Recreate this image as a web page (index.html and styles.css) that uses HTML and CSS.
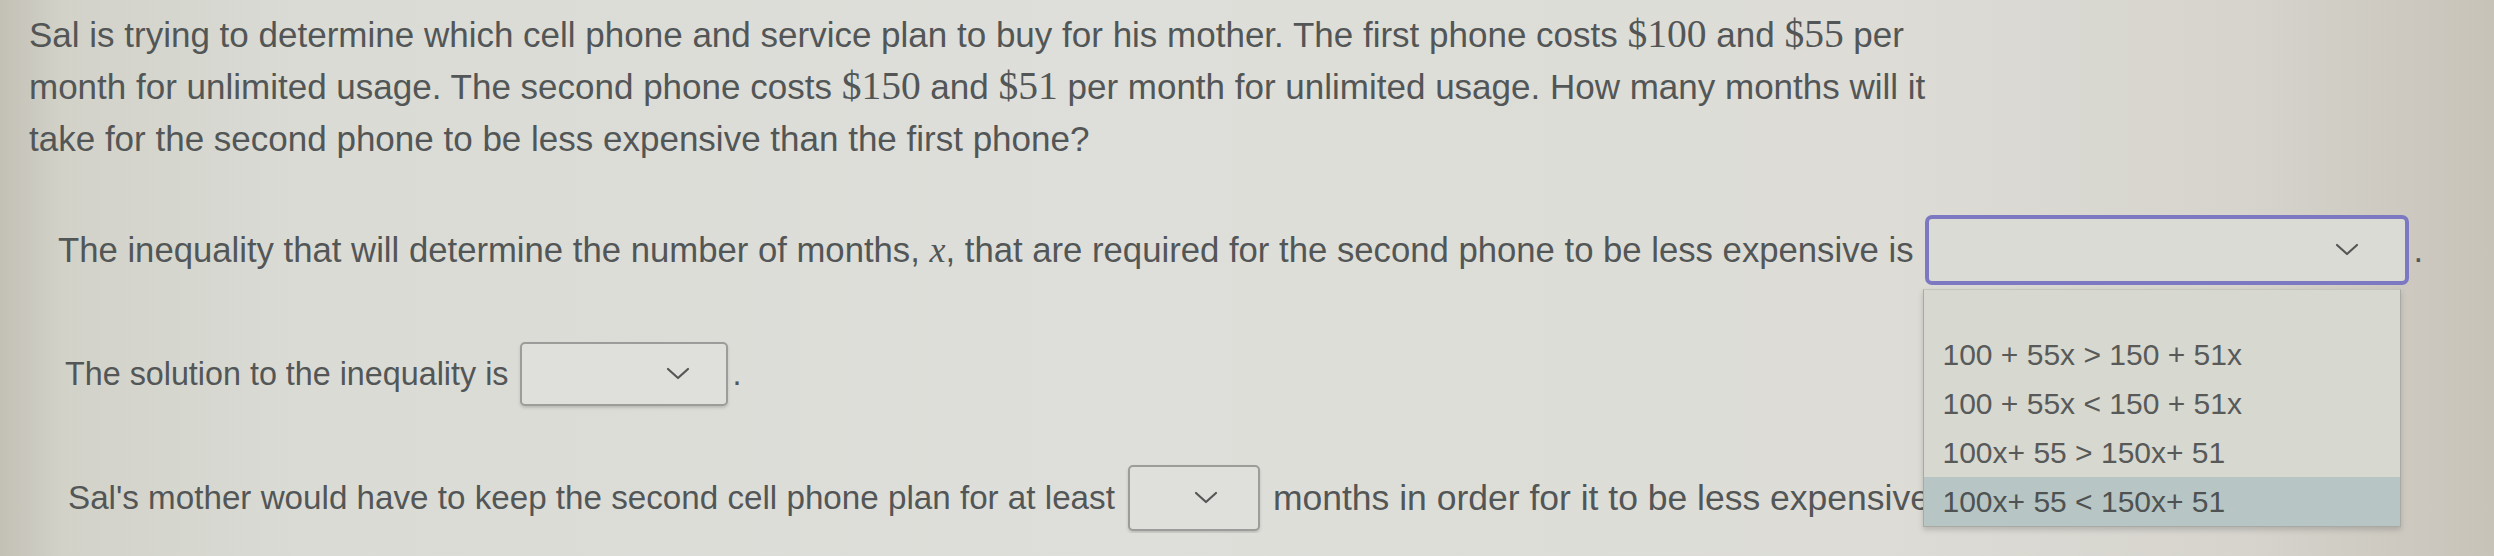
FILE: index.html
```html
<!DOCTYPE html>
<html lang="en">
<head>
<meta charset="utf-8">
<title>Cell phone plans</title>
<link rel="stylesheet" href="styles.css">
</head>
<body>
<main class="page">
  <p class="problem">Sal is trying to determine which cell phone and service plan to buy for his mother. The first phone costs <span class="math">$100</span> and <span class="math">$55</span> per month for unlimited usage. The second phone costs <span class="math">$150</span> and <span class="math">$51</span> per month for unlimited usage. How many months will it take for the second phone to be less expensive than the first phone?</p>

  <section class="answers">
    <div class="row row-first">
      <span class="txt">The inequality that will determine the number of months, <i class="mvar">x</i>, that are required for the second phone to be less expensive is</span>
      <div class="select-wrap">
        <div class="select select-open">
          <svg class="chev" viewBox="0 0 24 14" width="24" height="14"><polyline points="2,2 12,11 22,2" fill="none" stroke="#565656" stroke-width="2.2" stroke-linecap="round" stroke-linejoin="round"/></svg>
        </div>
        <ul class="menu">
          <li class="opt opt-blank"></li>
          <li class="opt">100 + 55x &gt; 150 + 51x</li>
          <li class="opt">100 + 55x &lt; 150 + 51x</li>
          <li class="opt">100x+ 55 &gt; 150x+ 51</li>
          <li class="opt opt-hover">100x+ 55 &lt; 150x+ 51</li>
        </ul>
      </div>
      <span class="dot">.</span>
    </div>

    <div class="row row-mid">
      <span class="txt">The solution to the inequality is</span>
      <div class="select select-mid">
        <svg class="chev" viewBox="0 0 24 14" width="24" height="14"><polyline points="2,2 12,11 22,2" fill="none" stroke="#565656" stroke-width="2.2" stroke-linecap="round" stroke-linejoin="round"/></svg>
      </div>
      <span class="dot">.</span>
    </div>

    <div class="row row-last">
      <span class="txt">Sal's mother would have to keep the second cell phone plan for at least</span>
      <div class="select select-small">
        <svg class="chev" viewBox="0 0 24 14" width="24" height="14"><polyline points="2,2 12,11 22,2" fill="none" stroke="#565656" stroke-width="2.2" stroke-linecap="round" stroke-linejoin="round"/></svg>
      </div>
      <span class="txt tail">months in order for it to be less expensive than the first phone.</span>
    </div>
  </section>
</main>
</body>
</html>
```

FILE: styles.css
```css
html, body {
  margin: 0;
  padding: 0;
  height: 556px;
  overflow: hidden;
}

body {
  font-family: "Liberation Sans", Arial, sans-serif;
  color: #535656;
  background: linear-gradient(90deg, #c3c0b5 0%, #d2d2c9 2.5%, #dadbd5 12%, #dedfda 45%, #dddcd6 75%, #d6d4cd 90%, #c8c3b9 100%);
}

.page {
  padding: 9px 0 0 29px;
}

.problem {
  margin: 0;
  max-width: 1960px;
  font-size: 35px;
  line-height: 52px;
}

.math {
  font-family: "Liberation Serif", "Times New Roman", serif;
  font-size: 39.5px;
  line-height: 0;
}

.mvar {
  font-family: "Liberation Serif", "Times New Roman", serif;
  font-style: italic;
  font-size: 36px;
}

.answers {
  margin-top: 50px;
  padding-left: 33px;
  display: flex;
  flex-direction: column;
  gap: 54px;
}

.row {
  display: flex;
  align-items: center;
  height: 70px;
  font-size: 32px;
  white-space: nowrap;
}

.row-first {
  font-size: 34.7px;
  margin-left: -4px;
}

.row-mid {
  font-size: 32.3px;
  margin-left: 3px;
}

.row-last {
  font-size: 33.2px;
  margin-left: 6px;
  max-width: 2290px;
  overflow: hidden;
}

.tail {
  font-size: 35.5px;
}

.txt {
  flex: none;
}

.dot {
  margin-left: 4px;
}

.select-wrap {
  position: relative;
  margin-left: 12px;
}

.select {
  box-sizing: border-box;
  display: flex;
  align-items: center;
  justify-content: flex-end;
  border: 2px solid #9c9d9a;
  border-radius: 5px;
  background: #dfe0db;
  box-shadow: 0 2px 3px rgba(90, 90, 90, 0.25);
}

.select-open {
  width: 484px;
  height: 70px;
  border: 4px solid #7c79c2;
  border-radius: 7px;
  padding-right: 46px;
  background: #dadbd4;
  box-shadow: none;
}

.select-mid {
  width: 208px;
  height: 64px;
  margin-left: 12px;
  padding-right: 36px;
}

.select-small {
  width: 132px;
  height: 66px;
  margin: 0 13px;
  padding-right: 40px;
}

.chev {
  display: block;
}

.menu {
  position: absolute;
  left: -2px;
  top: 74px;
  z-index: 5;
  box-sizing: border-box;
  width: 478px;
  margin: 0;
  padding: 0;
  list-style: none;
  background: #d7d8d0;
  border: 1px solid #a9aaa3;
  border-top-color: #c4c5bd;
  box-shadow: 0 3px 5px rgba(80, 80, 80, 0.25);
}

.opt {
  height: 49px;
  line-height: 49px;
  padding-left: 18px;
  font-size: 30px;
  color: #585a5a;
}

.opt-blank {
  height: 40px;
}

.opt-hover {
  background: #b7c6c4;
  color: #4e5252;
}
```
